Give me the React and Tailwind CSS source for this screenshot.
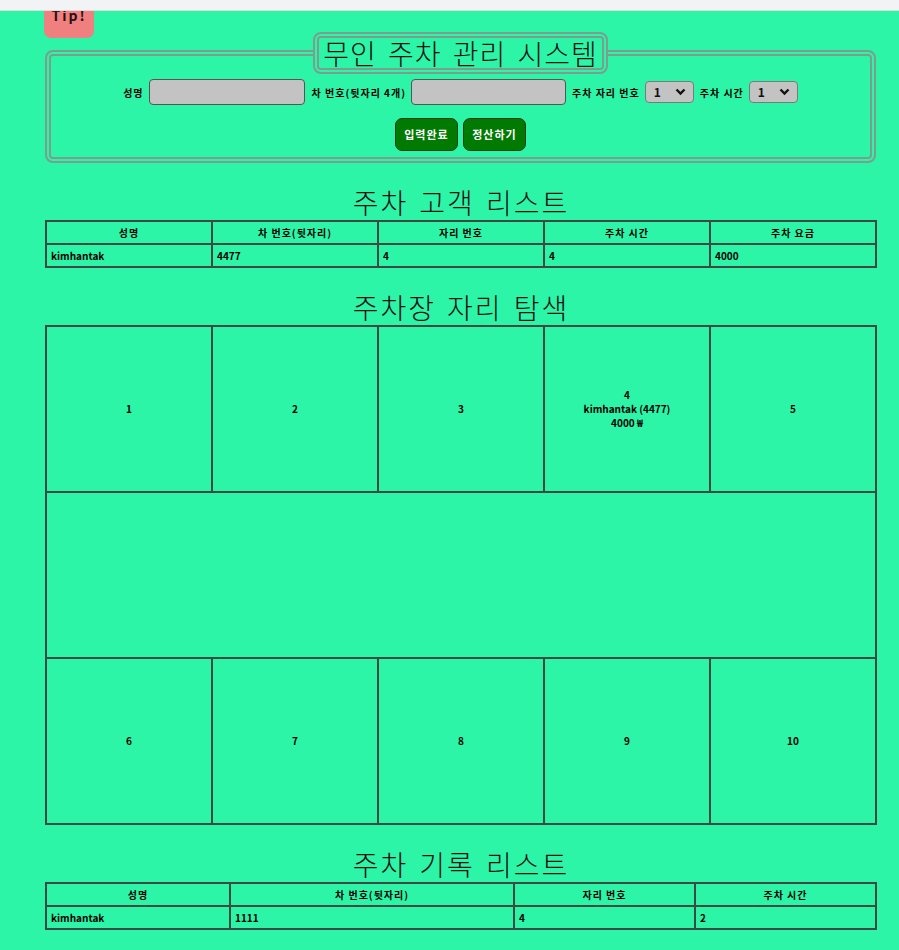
import React from 'react';

const font = { fontFamily: '"Noto Sans CJK KR", "Noto Sans", sans-serif' };

const customers = [
  { name: 'kimhantak', car: '4477', spot: '4', hours: '4', fee: '4000' },
];

const records = [{ name: 'kimhantak', car: '1111', spot: '4', hours: '2' }];

function Select() {
  return (
    <div className="relative w-[49px] h-[22px]">
      <select className="appearance-none w-full h-full bg-[#c3c3c3] border border-[#7a7a7a] rounded-[4px] pl-[8px] text-[12px] font-bold text-[#111] outline-none">
        <option>1</option>
      </select>
      {/* chevron over the select */}
      <svg className="absolute right-[8px] top-[7px] pointer-events-none" width="11" height="8" viewBox="0 0 11 8">
        <path d="M1.5 1.5 L5.5 5.5 L9.5 1.5" fill="none" stroke="#111" strokeWidth="2.4" />
      </svg>
    </div>
  );
}

function Heading({ children }) {
  return (
    <h2 className="mt-[22px] h-[35px] leading-[35px] text-center text-[28px] font-light text-[#111] tracking-[2px] [word-spacing:3px]">
      {children}
    </h2>
  );
}

const th = 'border-2 border-[#3d4a44] h-[23px] text-[10px] font-bold text-center tracking-[1px] p-0';
const td = 'border-2 border-[#3d4a44] h-[23px] text-[10px] font-bold text-left pl-[4px] p-0';
const cell = 'border-2 border-[#3d4a44] h-[166px] text-[10px] font-bold text-center leading-[14px] p-0 w-[166px]';

export default function App() {
  return (
    <div className="relative min-h-screen bg-[#2df5a8] text-black" style={font}>
      <div className="h-[11px]" />

      {/* floating tip button, partly under the top bar */}
      <button className="absolute left-[44px] top-[0px] w-[50px] h-[38px] bg-[#f08080] rounded-[7px] text-[14px] font-bold tracking-[2px] text-[#2a1010] pb-[8px] leading-[14px]">
        Tip!
      </button>
      <div className="h-[11px] bg-[#f1f3f4] border-b border-[#dcdcdc] absolute top-0 left-0 right-0" />

      <div className="ml-[45px] w-[832px] pb-[20px]">
        <fieldset className="mt-[21px] border-[6px] border-double border-[#7b9e8e] rounded-[8px] pt-[5px] pb-[6px] px-0 m-0 w-[831px]">
          <legend className="mx-auto border-[6px] border-double border-[#7b9e8e] rounded-[8px] px-[4px] h-[42px] leading-[30px] text-[28px] font-light text-[#111] tracking-[1px] [word-spacing:4px]">
            무인 주차 관리 시스템
          </legend>
          <div className="flex items-center justify-center h-[26px] text-[10px] font-bold tracking-[1px]">
            <span>성명</span>
            <input className="ml-[5px] w-[156px] h-[26px] bg-[#c3c3c3] border border-[#555] rounded-[4px]" />
            <span className="ml-[7px]">차 번호(뒷자리 4개)</span>
            <input className="ml-[5px] w-[155px] h-[26px] bg-[#c3c3c3] border border-[#555] rounded-[4px]" />
            <span className="ml-[6px] mr-[5px]">주차 자리 번호</span>
            <Select />
            <span className="ml-[6px] mr-[5px]">주차 시간</span>
            <Select />
          </div>
          <div className="flex justify-center gap-[5px] mt-[13px]">
            <button className="w-[63px] h-[33px] bg-[#007a00] border border-[#1a3a1a] rounded-[7px] text-white text-[11px] font-bold tracking-[1px]">
              입력완료
            </button>
            <button className="w-[63px] h-[33px] bg-[#007a00] border border-[#1a3a1a] rounded-[7px] text-white text-[11px] font-bold tracking-[1px]">
              정산하기
            </button>
          </div>
        </fieldset>

        <Heading>주차 고객 리스트</Heading>
        <table className="w-[832px] border-collapse table-fixed">
          <thead>
            <tr>
              <th className={th}>성명</th>
              <th className={th}>차 번호(뒷자리)</th>
              <th className={th}>자리 번호</th>
              <th className={th}>주차 시간</th>
              <th className={th}>주차 요금</th>
            </tr>
          </thead>
          <tbody>
            {customers.map((c) => (
              <tr key={c.car}>
                <td className={td}>{c.name}</td>
                <td className={td}>{c.car}</td>
                <td className={td}>{c.spot}</td>
                <td className={td}>{c.hours}</td>
                <td className={td}>{c.fee}</td>
              </tr>
            ))}
          </tbody>
        </table>

        <Heading>주차장 자리 탐색</Heading>
        <table className="w-[832px] border-collapse table-fixed">
          <tbody>
            <tr>
              <td className={cell}>1</td>
              <td className={cell}>2</td>
              <td className={cell}>3</td>
              <td className={cell}>
                4<br />kimhantak (4477)<br />4000 ₩
              </td>
              <td className={cell}>5</td>
            </tr>
            <tr>
              <td className={cell} colSpan={5}></td>
            </tr>
            <tr>
              <td className={cell}>6</td>
              <td className={cell}>7</td>
              <td className={cell}>8</td>
              <td className={cell}>9</td>
              <td className={cell}>10</td>
            </tr>
          </tbody>
        </table>

        <Heading>주차 기록 리스트</Heading>
        <table className="w-[832px] border-collapse table-fixed">
          <thead>
            <tr>
              <th className={th + ' w-[184px]'}>성명</th>
              <th className={th + ' w-[284px]'}>차 번호(뒷자리)</th>
              <th className={th + ' w-[181px]'}>자리 번호</th>
              <th className={th}>주차 시간</th>
            </tr>
          </thead>
          <tbody>
            {records.map((r) => (
              <tr key={r.car}>
                <td className={td}>{r.name}</td>
                <td className={td}>{r.car}</td>
                <td className={td}>{r.spot}</td>
                <td className={td}>{r.hours}</td>
              </tr>
            ))}
          </tbody>
        </table>
      </div>
    </div>
  );
}
